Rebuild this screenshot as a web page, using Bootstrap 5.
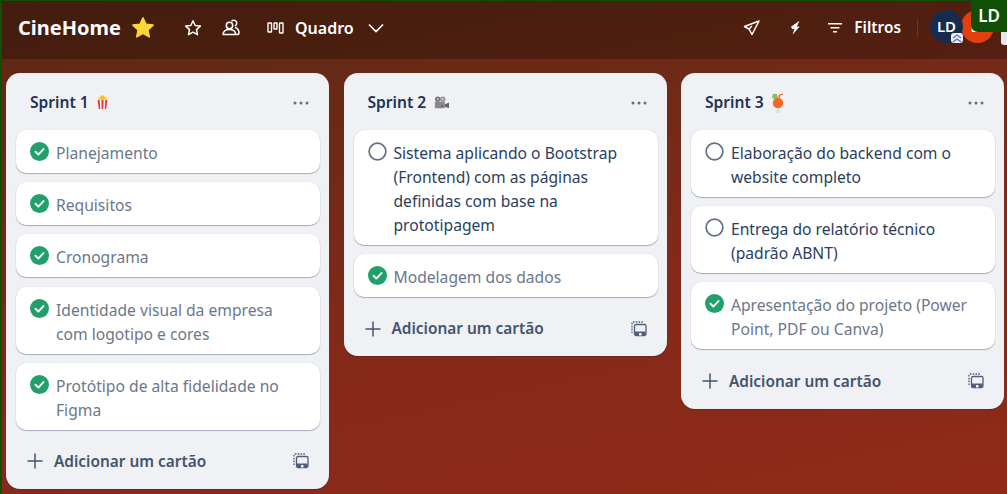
<!DOCTYPE html>
<html lang="pt-BR">
<head>
  <meta charset="UTF-8" />
  <meta name="viewport" content="width=device-width, initial-scale=1" />
  <title>CineHome</title>
  <link href="https://cdn.jsdelivr.net/npm/bootstrap@5.3.2/dist/css/bootstrap.min.css" rel="stylesheet">
  <style>
    html, body { height: 100%; }
    body {
      font-family: "Noto Sans", "Liberation Sans", sans-serif;
      overflow: hidden;
      background: linear-gradient(168deg, #5a2813 0%, #6c2a16 28%, #85291a 60%, #8f2a17 100%);
      border-top: 1px solid #0f4f08;
      border-left: 2px solid #0f4f08;
    }
    .board-bar { height: 58px; background: rgba(0,0,0,.26); padding: 0 0 5px 16px; color: #fff; }
    .board-name { font-size: 20px; font-weight: 700; margin-right: 10px; }
    .bar-text { font-size: 16px; font-weight: 600; }
    .bar-filter { font-size: 15.4px; margin-left: 11px; }
    .bar-sep { width: 1px; height: 20px; background: #5d3a28; margin: 0 12px 0 16px; }
    .icon-fav { margin-left: 29px; }
    .icon-team { margin-left: 20px; margin-right: 27px; }
    .icon-board { margin-right: 11px; }
    .icon-chevron { margin-left: 13px; }
    .icon-bolt { margin-left: 28px; }
    .icon-filter { margin-left: 25px; }
    .avatar-round { width: 33px; height: 33px; border-radius: 50%; font-size: 15px; font-weight: 600; color: #fff; flex: none; margin-bottom: 2px; }
    .avatar-blue { background: #172b4d; }
    .avatar-red { background: #e2400f; margin-left: -2px; margin-right: 13px; padding-left: 5px; }
    .avatar-wrap { position: relative; }
    .avatar-badge { position: absolute; right: 0; bottom: 2px; width: 12px; height: 10px; background: #eef0fb; border-radius: 3px; }
    .green-tag { position: absolute; top: 0; right: 0; width: 36px; height: 32px; background: #0f4f08; color: #fff; font-size: 17px; font-weight: 600; border-radius: 0 0 0 7px; }
    .side-tab { position: absolute; top: 32px; right: 0; width: 6px; height: 13px; background: #e4e6ea; border-radius: 0 0 0 3px; }
    .lists-row { padding: 14px 0 0 4px; gap: 14.5px; align-items: flex-start; }
    .sprint-list { width: 323px; flex: none; background: #f0f1f4; border-radius: 14px; padding: 0 9px 0 10px; box-shadow: 0 1px 1px rgba(9,30,66,.25); color: #172b4d; }
    .list-head { height: 57px; padding: 3px 11px 0 14px; }
    .list-title { font-size: 15.6px; font-weight: 600; color: #1f3157; gap: 7px; }
    .task-card { background: #fff; border-radius: 10px; box-shadow: 0 1px 1px rgba(9,30,66,.3), 0 0 1px rgba(9,30,66,.2); padding: 11px 12px 8px 14px; margin-bottom: 9.2px; font-size: 15.65px; line-height: 24px; gap: 7px; color: #2c3e5d; }
    .task-card.is-done { color: #6b778c; }
    .task-icon { flex: none; width: 19px; height: 19px; margin-top: 1px; }
    .task-text { min-width: 0; }
    .add-row { height: 50px; padding: 0 11px 5px 11px; color: #44546f; font-size: 15.4px; font-weight: 600; }
    .add-label { margin-left: 11px; }
  </style>
</head>
<body>
  <header class="board-bar d-flex align-items-center">
    <span class="board-name">CineHome</span>
    <svg width="24" height="24" viewBox="0 0 24 24"><path d="M12 1.800l3 6.500 7.100.8-5.200 4.800 1.400 7-6.300-3.500-6.300 3.500 1.400-7L1.900 9.100l7.100-.8z" fill="#fdd835" stroke="#fdd835" stroke-width="1.500" stroke-linejoin="round"/></svg>
    <svg class="icon-fav" width="18" height="18" viewBox="0 0 18 18" fill="none" stroke="#fff" stroke-width="1.500" stroke-linejoin="round"><path d="M9 1.800l2.200 4.700 5.100.6-3.800 3.500 1 5.100L9 13.200l-4.500 2.500 1-5.100L1.700 7.100l5.100-.6z"/></svg>
    <svg class="icon-team" width="18" height="18" viewBox="0 0 18 18" fill="none" stroke="#fff" stroke-width="1.500" stroke-linejoin="round"><circle cx="7.500" cy="6.500" r="3.200"/><path d="M9.500 2.200a3 3 0 1 1 3.300 4.800"/><path d="M1 15.500c.2-3 2.600-5 6.500-5s6 2 6.200 5z"/><path d="M13 8.500c2.200.6 3.800 2.500 4 5 0 1.200-.5 2-1.500 2h-1.800"/></svg>
    <svg class="icon-board" width="17" height="14" viewBox="0 0 17 14" fill="none" stroke="#fff" stroke-width="1.400"><rect x="1" y="2" width="3.500" height="9" rx=".5"/><rect x="7" y="2" width="3" height="6" rx=".5"/><rect x="12.500" y="2" width="3.500" height="10" rx=".5"/></svg>
    <span class="bar-text">Quadro</span>
    <svg class="icon-chevron" width="18" height="18" viewBox="0 0 18 18" fill="none" stroke="#fff" stroke-width="1.600"><path d="M2 5.500l7 7 7-7"/></svg>
    <div class="ms-auto d-flex align-items-center">
      <svg width="18" height="18" viewBox="0 0 18 18" fill="none" stroke="#fff" stroke-width="1.500" stroke-linejoin="round"><path d="M16 2L1.500 7.500l4.500 2.500 3 5.500z"/><path d="M6 10l3-3"/></svg>
      <svg class="icon-bolt" width="13" height="16" viewBox="0 0 13 16" fill="#fff"><path d="M10.500 .800L2 6.800l1.200 2.400 2.400-.5-2.100 6 7.200-8.200H7.800l2.700-5.700z"/></svg>
      <svg class="icon-filter" width="16" height="12" viewBox="0 0 16 12" fill="#fff"><rect x="1" y="1" width="14" height="1.500"/><rect x="3.500" y="5" width="9" height="1.500"/><rect x="6" y="9" width="4" height="1.500"/></svg>
      <span class="bar-text bar-filter">Filtros</span>
      <span class="bar-sep"></span>
      <div class="avatar-wrap">
        <div class="avatar-round avatar-blue d-flex align-items-center justify-content-center">LD</div>
        <span class="avatar-badge d-flex">
          <svg width="12" height="10" viewBox="0 0 12 10" fill="none" stroke="#5b6fd8" stroke-width="1.400"><path d="M2 5l4-3 4 3M2 9l4-3 4 3"/></svg>
        </span>
      </div>
      <div class="avatar-round avatar-red d-flex align-items-center justify-content-center">LD</div>
    </div>
    <div class="green-tag d-flex align-items-center justify-content-center">LD</div>
    <div class="side-tab"></div>
  </header>

  <main class="lists-row d-flex">
    <section class="sprint-list" id="s1"></section>
    <section class="sprint-list" id="s2"></section>
    <section class="sprint-list" id="s3"></section>
  </main>

  <script src="https://cdn.jsdelivr.net/npm/bootstrap@5.3.2/dist/js/bootstrap.bundle.min.js"></script>
  <script>
    const popcorn = `<svg width="13" height="17" viewBox="0 0 16 18"><circle cx="5" cy="4" r="2.500" fill="#fdd835"/><circle cx="11" cy="4" r="2.500" fill="#fdd835"/><circle cx="8" cy="3" r="2.800" fill="#f9c02e"/><path d="M2 6h12l-1.500 11h-9z" fill="#fff"/><path d="M2 6h2.500l.8 11H3.500zM6.700 6h2.600l-.3 11H7zM11.500 6H14l-1.500 11h-1.800z" fill="#e5333a"/></svg>`;
    const projector = `<svg width="17" height="15" viewBox="0 0 20 18"><circle cx="5.500" cy="5" r="3.300" fill="#77777c"/><circle cx="11.500" cy="5" r="3.300" fill="#98989d"/><circle cx="5.500" cy="5" r="1" fill="#ddd"/><circle cx="11.500" cy="5" r="1" fill="#ddd"/><rect x="2" y="8" width="12" height="8" rx="1" fill="#88888d"/><path d="M14 11l5-2v7l-5-2z" fill="#66666b"/><rect x="9.500" y="12" width="2.500" height="2" fill="#d8344a"/></svg>`;
    const cocktail = `<svg width="14" height="20" viewBox="0 0 14 20"><circle cx="4" cy="3.500" r="2.800" fill="#8bc34a"/><path d="M7.500 7l1.300-5 3.200-.8" fill="none" stroke="#e5533a" stroke-width="1.100"/><circle cx="7" cy="10" r="5.200" fill="#f4692a"/><path d="M7 15v3M4.500 19h5" stroke="#b3d4e8" stroke-width="1.200" fill="none"/></svg>`;
    const doneIcon = `<svg class="task-icon" viewBox="0 0 20 20"><circle cx="10" cy="10" r="10" fill="#22a06b"/><path d="M5.800 10.300l3 2.900 5.400-5.800" fill="none" stroke="#fff" stroke-width="2" stroke-linecap="round" stroke-linejoin="round"/></svg>`;
    const openIcon = `<svg class="task-icon" viewBox="0 0 20 20"><circle cx="10" cy="10" r="8.800" fill="none" stroke="#626f86" stroke-width="1.800"/></svg>`;
    const plusIcon = `<svg width="16" height="16" viewBox="0 0 16 16" stroke="#44546f" stroke-width="1.500"><path d="M8 .500v15M.500 8h15"/></svg>`;
    const templateIcon = `<svg width="16" height="16" viewBox="0 0 16 16" fill="none" stroke="#505f79" stroke-width="1.300"><path d="M1 12V2.200Q1 1 2.200 1H12" stroke-dasharray="1.600 1.200"/><rect x="3.500" y="3.500" width="11.500" height="11" rx="1.500"/><rect x="4" y="10.500" width="10.500" height="3.500" fill="#505f79" stroke="none"/><rect x="8" y="12" width="2.500" height="2.500" fill="#f0f1f4" stroke="none"/></svg>`;
    const dots = `<svg width="16" height="4" viewBox="0 0 16 4" fill="#626f86"><circle cx="2" cy="2" r="1.500"/><circle cx="8" cy="2" r="1.500"/><circle cx="14" cy="2" r="1.500"/></svg>`;

    const lists = [
      { id: "s1", title: "Sprint 1", emoji: popcorn, cards: [
        ["Planejamento", true], ["Requisitos", true], ["Cronograma", true],
        ["Identidade visual da empresa com logotipo e cores", true],
        ["Protótipo de alta fidelidade no Figma", true]
      ]},
      { id: "s2", title: "Sprint 2", emoji: projector, cards: [
        ["Sistema aplicando o Bootstrap (Frontend) com as páginas definidas com base na prototipagem", false],
        ["Modelagem dos dados", true]
      ]},
      { id: "s3", title: "Sprint 3", emoji: cocktail, cards: [
        ["Elaboração do backend com o website completo", false],
        ["Entrega do relatório técnico (padrão ABNT)", false],
        ["Apresentação do projeto (Power Point, PDF ou Canva)", true]
      ]}
    ];

    lists.forEach(l => {
      const cards = l.cards.map(([text, done]) => `
        <div class="task-card d-flex ${done ? "is-done" : ""}">
          ${done ? doneIcon : openIcon}
          <div class="task-text">${text}</div>
        </div>`).join("");
      document.getElementById(l.id).innerHTML = `
        <div class="list-head d-flex align-items-center justify-content-between">
          <div class="list-title d-flex align-items-center">${l.title} ${l.emoji}</div>
          ${dots}
        </div>
        ${cards}
        <div class="add-row d-flex align-items-center">
          ${plusIcon}
          <span class="add-label">Adicionar um cartão</span>
          <span class="ms-auto d-flex">${templateIcon}</span>
        </div>`;
    });
  </script>
</body>
</html>
